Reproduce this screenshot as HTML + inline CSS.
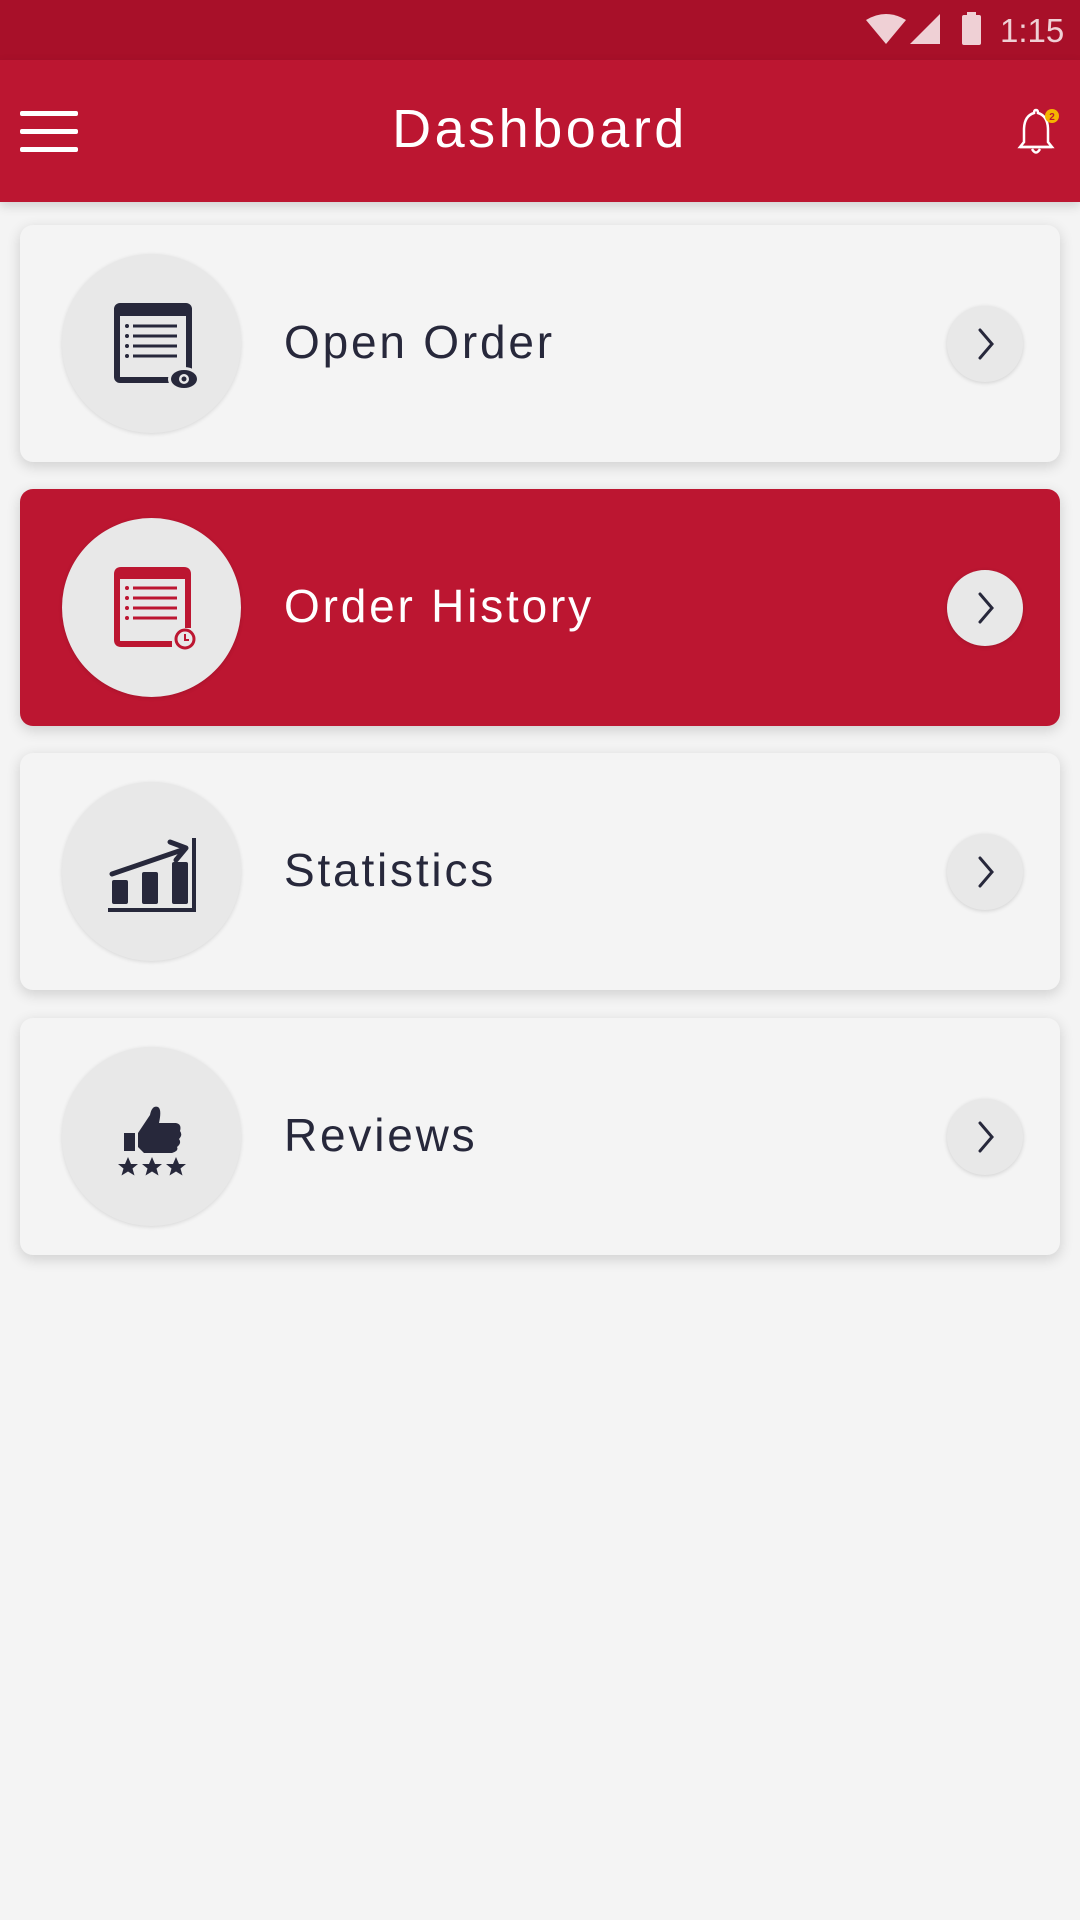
<!DOCTYPE html>
<html><head><meta charset="utf-8"><style>
*{margin:0;padding:0;box-sizing:border-box}
body{width:1080px;height:1920px;background:#f4f4f4;font-family:"Liberation Sans",sans-serif;position:relative;overflow:hidden}
.sb{position:absolute;left:0;top:0;width:1080px;height:60px;background:#a81029}
.ab{position:absolute;left:0;top:60px;width:1080px;height:142px;background:#bc1631;box-shadow:0 4px 10px rgba(0,0,0,.15)}
.title{position:absolute;left:0;width:1080px;top:97px;text-align:center;color:#fff;font-size:54px;letter-spacing:3.5px;line-height:64px}
.ham{position:absolute;left:20px;width:58px;height:5px;background:#fff;border-radius:2px}
.card{position:absolute;left:20px;width:1040px;height:237px;background:#f4f4f4;border-radius:13px;box-shadow:0 4px 14px rgba(0,0,0,.16)}
.card.red{background:#bc1631}
.circ{position:absolute;left:42px;top:29px;width:179px;height:179px;border-radius:50%;background:#e8e8e8;box-shadow:0 1px 4px rgba(0,0,0,.12)}
.circ svg{position:absolute;left:0;top:0}
.lbl{position:absolute;left:264px;top:90px;font-size:46px;letter-spacing:2.8px;line-height:54px;color:#27283b}
.red .lbl{color:#fff}
.chev{position:absolute;left:927px;top:81px;width:76px;height:76px;border-radius:50%;background:#e8e8e8;box-shadow:0 1px 4px rgba(0,0,0,.15)}
</style></head><body>
<div class="sb">
<svg width="1080" height="60" style="position:absolute;left:0;top:0">
<path d="M866 20 Q886 8 906 20 L886 44 Z" fill="#efd0d5"/>
<path d="M910 44 L940 14 L940 44 Z" fill="#efd0d5"/>
<rect x="962" y="15" width="19" height="30" rx="2" fill="#efd0d5"/><rect x="967" y="12" width="9" height="4" fill="#efd0d5"/>
<text x="1000" y="42" fill="#efd0d5" font-size="33" font-family="Liberation Sans">1:15</text>
</svg></div>
<div class="ab"></div>
<div class="ham" style="top:111px"></div><div class="ham" style="top:129px"></div><div class="ham" style="top:147px"></div>
<div class="title">Dashboard</div>
<svg width="60" height="60" style="position:absolute;left:1006px;top:102px">
<path d="M30 8 Q28 8 28 11 Q18 14 18 28 L18 40 L14 45 L46 45 L42 40 L42 28 Q42 14 32 11 Q32 8 30 8 Z" fill="none" stroke="#fff" stroke-width="2.5"/>
<line x1="14" y1="45" x2="46" y2="45" stroke="#fff" stroke-width="2.5"/>
<path d="M26 47 Q30 54 34 47" fill="none" stroke="#fff" stroke-width="2.5"/>
<circle cx="46" cy="14" r="7" fill="#f5b400"/><text x="46" y="18" fill="#bc1631" font-size="10" font-weight="bold" text-anchor="middle">2</text>
</svg>

<div class="card" style="top:225px">
<div class="circ"><svg width="179" height="179">
<rect x="55" y="52" width="72" height="74" rx="3" fill="none" stroke="#27283b" stroke-width="6"/>
<rect x="55" y="52" width="72" height="10" fill="#27283b"/>
<g stroke="#27283b" stroke-width="3"><line x1="71" y1="72" x2="115" y2="72"/><line x1="71" y1="82" x2="115" y2="82"/><line x1="71" y1="92" x2="115" y2="92"/><line x1="71" y1="102" x2="115" y2="102"/></g>
<g fill="#27283b"><circle cx="65" cy="72" r="2"/><circle cx="65" cy="82" r="2"/><circle cx="65" cy="92" r="2"/><circle cx="65" cy="102" r="2"/></g>
<ellipse cx="122" cy="125" rx="16" ry="12" fill="#e8e8e8"/>
<ellipse cx="122" cy="125" rx="13" ry="9" fill="#27283b"/><circle cx="122" cy="125" r="5" fill="#e8e8e8"/><circle cx="122" cy="125" r="2.5" fill="#27283b"/>
</svg></div>
<div class="lbl">Open Order</div>
<div class="chev"><svg width="76" height="76"><path d="M33 24 L45 38 L33 52" fill="none" stroke="#27283b" stroke-width="3" stroke-linecap="round"/></svg></div>
</div>

<div class="card red" style="top:489px">
<div class="circ"><svg width="179" height="179">
<path d="M126 110 L126 56 Q126 52 122 52 L59 52 Q55 52 55 56 L55 122 Q55 126 59 126 L110 126" fill="none" stroke="#bc1631" stroke-width="6"/>
<rect x="55" y="52" width="72" height="9" fill="#bc1631"/>
<g stroke="#bc1631" stroke-width="3"><line x1="71" y1="70" x2="115" y2="70"/><line x1="71" y1="80" x2="115" y2="80"/><line x1="71" y1="90" x2="115" y2="90"/><line x1="71" y1="100" x2="115" y2="100"/></g>
<g fill="#bc1631"><circle cx="65" cy="70" r="2"/><circle cx="65" cy="80" r="2"/><circle cx="65" cy="90" r="2"/><circle cx="65" cy="100" r="2"/></g>
<circle cx="123" cy="121" r="9" fill="#e8e8e8" stroke="#bc1631" stroke-width="3"/>
<path d="M123 116 L123 122 L127 122" fill="none" stroke="#bc1631" stroke-width="2"/>
</svg></div>
<div class="lbl">Order History</div>
<div class="chev"><svg width="76" height="76"><path d="M33 24 L45 38 L33 52" fill="none" stroke="#27283b" stroke-width="3" stroke-linecap="round"/></svg></div>
</div>

<div class="card" style="top:753px">
<div class="circ"><svg width="179" height="179">
<rect x="50" y="98" width="16" height="24" rx="2" fill="#27283b"/>
<rect x="80" y="90" width="16" height="32" rx="2" fill="#27283b"/>
<rect x="110" y="80" width="16" height="42" rx="2" fill="#27283b"/>
<line x1="46" y1="128" x2="134" y2="128" stroke="#27283b" stroke-width="4"/>
<line x1="132" y1="56" x2="132" y2="130" stroke="#27283b" stroke-width="4"/>
<path d="M50 92 L120 68" stroke="#27283b" stroke-width="5" stroke-linecap="round"/>
<path d="M108 60 L124 66 L114 78" fill="none" stroke="#27283b" stroke-width="5" stroke-linecap="round" stroke-linejoin="round"/>
</svg></div>
<div class="lbl">Statistics</div>
<div class="chev"><svg width="76" height="76"><path d="M33 24 L45 38 L33 52" fill="none" stroke="#27283b" stroke-width="3" stroke-linecap="round"/></svg></div>
</div>

<div class="card" style="top:1018px">
<div class="circ"><svg width="179" height="179">
<path d="M62 86 L73 86 L73 104 L62 104 Z" fill="#27283b"/>
<path d="M76 86 L88 68 Q90 58 96 60 Q100 62 97 76 L114 76 Q120 77 118 84 Q121 88 117 92 Q120 96 115 100 Q117 104 110 106 L82 106 L76 100 Z" fill="#27283b"/>
<g fill="#27283b">
<path d="M66 110 l3 7 7 0 -5.5 4.5 2 7 -6.5 -4 -6.5 4 2 -7 -5.5 -4.5 7 0 z"/>
<path d="M90 110 l3 7 7 0 -5.5 4.5 2 7 -6.5 -4 -6.5 4 2 -7 -5.5 -4.5 7 0 z"/>
<path d="M114 110 l3 7 7 0 -5.5 4.5 2 7 -6.5 -4 -6.5 4 2 -7 -5.5 -4.5 7 0 z"/>
</g>
</svg></div>
<div class="lbl">Reviews</div>
<div class="chev"><svg width="76" height="76"><path d="M33 24 L45 38 L33 52" fill="none" stroke="#27283b" stroke-width="3" stroke-linecap="round"/></svg></div>
</div>
</body></html>
